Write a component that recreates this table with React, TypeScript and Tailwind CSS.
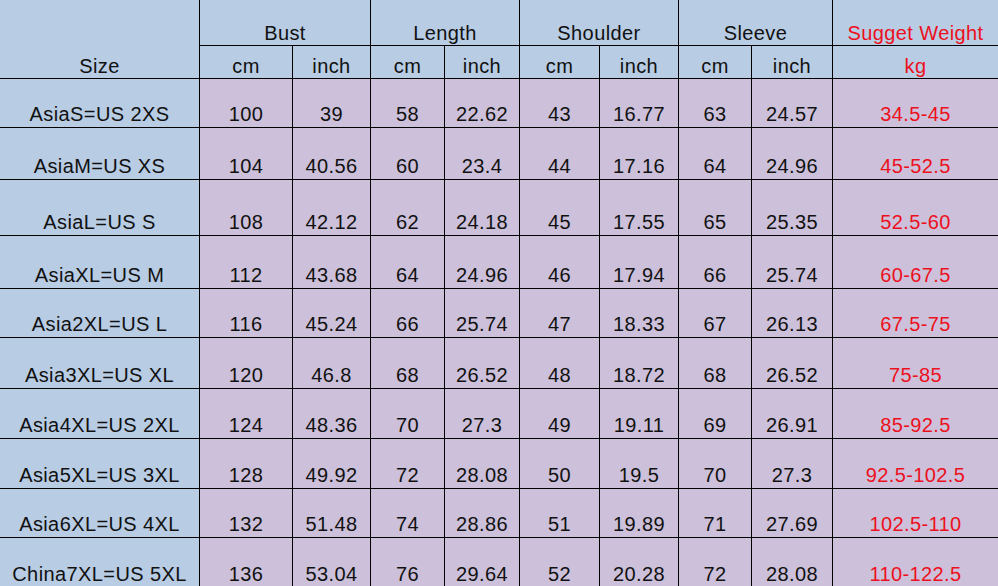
const ROWS = [
  ['AsiaS=US 2XS', '100', '39', '58', '22.62', '43', '16.77', '63', '24.57', '34.5-45'],
  ['AsiaM=US XS', '104', '40.56', '60', '23.4', '44', '17.16', '64', '24.96', '45-52.5'],
  ['AsiaL=US S', '108', '42.12', '62', '24.18', '45', '17.55', '65', '25.35', '52.5-60'],
  ['AsiaXL=US M', '112', '43.68', '64', '24.96', '46', '17.94', '66', '25.74', '60-67.5'],
  ['Asia2XL=US L', '116', '45.24', '66', '25.74', '47', '18.33', '67', '26.13', '67.5-75'],
  ['Asia3XL=US XL', '120', '46.8', '68', '26.52', '48', '18.72', '68', '26.52', '75-85'],
  ['Asia4XL=US 2XL', '124', '48.36', '70', '27.3', '49', '19.11', '69', '26.91', '85-92.5'],
  ['Asia5XL=US 3XL', '128', '49.92', '72', '28.08', '50', '19.5', '70', '27.3', '92.5-102.5'],
  ['Asia6XL=US 4XL', '132', '51.48', '74', '28.86', '51', '19.89', '71', '27.69', '102.5-110'],
  ['China7XL=US 5XL', '136', '53.04', '76', '29.64', '52', '20.28', '72', '28.08', '110-122.5'],
];

const GROUPS = ['Bust', 'Length', 'Shoulder', 'Sleeve'];

const cell = 'flex items-end justify-center border-b border-black text-[20px] leading-[20px] tracking-[0.4px] whitespace-nowrap';
const head = `${cell} pb-[2px] bg-[#b8cce4]`;
const body = `${cell} pb-[3px]`;

export default function App() {
  return (
    <div
      className="h-[586px] w-[998px] overflow-hidden bg-[#ccc0da] text-[#111]"
      style={{ fontFamily: '"Liberation Sans", Arial, sans-serif' }}
    >
      <div className="grid grid-cols-[200px_93px_78px_74px_75px_80px_79px_73px_81px_165px] grid-rows-[46px_33px_49px_52px_56px_53px_49px_51px_50px_50px_49px_50px]">
        {/* header row 1 */}
        <div className={`${head} row-span-2 border-r`}>Size</div>
        {GROUPS.map(g => (
          <div key={g} className={`${head} col-span-2 border-r`}>{g}</div>
        ))}
        <div className={`${head} text-[#ec1020]`}>Sugget Weight</div>

        {/* header row 2 */}
        {GROUPS.map(g => [
          <div key={g + 'cm'} className={`${head} border-r`}>cm</div>,
          <div key={g + 'in'} className={`${head} border-r`}>inch</div>,
        ])}
        <div className={`${head} text-[#ec1020]`}>kg</div>

        {/* body */}
        {ROWS.map(r =>
          r.map((v, i) => (
            <div
              key={r[0] + i}
              className={
                i === 0
                  ? `${body} border-r bg-[#b8cce4]`
                  : i === 9
                  ? `${body} text-[#ec1020]`
                  : `${body} border-r`
              }
            >
              {v}
            </div>
          ))
        )}
      </div>
    </div>
  );
}
